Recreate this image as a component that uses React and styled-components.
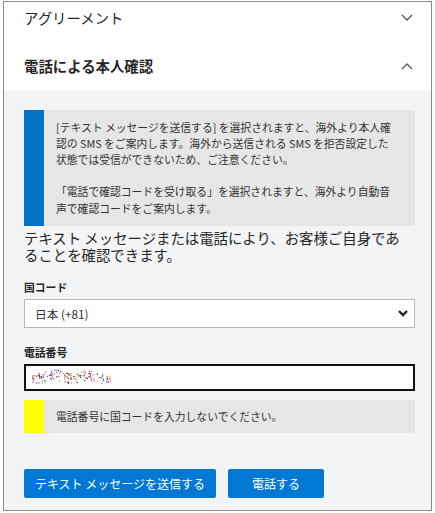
import React from 'react'
import styled, { createGlobalStyle } from 'styled-components'

const Global = createGlobalStyle`
  html, body {
    margin: 0;
    background: #ffffff;
  }
  body {
    font-family: "Noto Sans CJK JP", "Noto Sans", sans-serif;
    color: #262626;
  }
`

const Frame = styled.div`
  box-sizing: border-box;
  width: 429px;
  height: 510px;
  margin: 1px 0 0 3px;
  border: 1px solid #8a8a8a;
  overflow: hidden;
  display: flex;
  flex-direction: column;
`

const AccordionRow = styled.div`
  box-sizing: border-box;
  height: ${p => (p.$first ? '40px' : '48px')};
  padding: 0 18px ${p => (p.$first ? '8px' : '0')} 20px;
  display: flex;
  align-items: center;
  justify-content: space-between;
  background: #ffffff;
`

const RowTitle = styled.span`
  font-size: 14.4px;
  line-height: 22px;
  font-weight: ${p => (p.$bold ? 700 : 400)};
  color: #262626;
`

const Panel = styled.div`
  flex: 1;
  background: #f3f4f6;
  padding: 20px 16px 0 20px;
  display: flex;
  flex-direction: column;
`

const Notice = styled.div`
  display: flex;
  background: #e6e6e6;
  margin-top: ${p => p.$mt || 0}px;
`

const NoticeBar = styled.div`
  width: 20px;
  flex: none;
  background: ${p => p.$color};
`

const NoticeBody = styled.div`
  flex: 1;
  padding: ${p => p.$pad};
  font-size: 10.8px;
  line-height: 16.2px;
  color: #333333;
  p {
    margin: 0;
  }
  p + p {
    margin-top: 16.2px;
  }
`

const Lead = styled.p`
  margin: 3px 0 0;
  font-size: 14.4px;
  line-height: 17px;
  color: #262626;
`

const FieldLabel = styled.label`
  display: block;
  margin-top: ${p => p.$mt}px;
  font-size: 10.8px;
  line-height: 16px;
  font-weight: 700;
  color: #262626;
`

const SelectBox = styled.div`
  box-sizing: border-box;
  margin-top: 4px;
  height: 29px;
  background: #ffffff;
  border: 1px solid #b8b8b8;
  padding: 0 5px 0 10px;
  display: flex;
  align-items: center;
  justify-content: space-between;
  font-size: 11.7px;
  color: #333333;
`

const InputBox = styled.div`
  box-sizing: border-box;
  margin-top: 4px;
  height: 27px;
  background: #ffffff;
  border: 2px solid #111111;
  padding: 0 6px;
  display: flex;
  align-items: center;
`

const Buttons = styled.div`
  display: flex;
  gap: 12px;
  margin-top: 36px;
`

const Button = styled.button`
  box-sizing: border-box;
  height: 29px;
  width: ${p => p.$w}px;
  border: none;
  border-radius: 2px;
  background: #0078d4;
  color: #ffffff;
  font-family: "Noto Sans CJK JP", "Noto Sans", sans-serif;
  font-size: 12px;
  padding: 0;
  cursor: pointer;
`

function Chevron({ up }) {
  return (
    <svg width="12" height="8" viewBox="0 0 12 8">
      <path
        d={up ? 'M1 7 L6 2 L11 7' : 'M1 1 L6 6 L11 1'}
        fill="none"
        stroke="#555"
        strokeWidth="1.3"
      />
    </svg>
  )
}

function SelectArrow() {
  return (
    <svg width="12" height="8" viewBox="0 0 12 8">
      <path d="M2 2 L6 6 L10 2" fill="none" stroke="#222" strokeWidth="2.4" />
    </svg>
  )
}

// masked phone number: scattered coloured dots
function Scribble() {
  const colors = ['#222', '#f0a030', '#3a8ee0', '#d04080', '#888', '#e07020', '#6a3ad0']
  let seed = 7
  const rnd = () => {
    seed = (seed * 9301 + 49297) % 233280
    return seed / 233280
  }
  const dots = []
  for (let i = 0; i < 150; i++) {
    const x = rnd() * 78
    const y = 2 + rnd() * 11 + Math.sin(x / 5) * 1.5
    dots.push(
      <rect
        key={i}
        x={x.toFixed(1)}
        y={y.toFixed(1)}
        width="1.2"
        height="1.2"
        fill={colors[Math.floor(rnd() * colors.length)]}
      />
    )
  }
  return (
    <svg width="80" height="16" viewBox="0 0 80 16">
      {dots}
    </svg>
  )
}

export default function App() {
  return (
    <>
      <Global />
      <Frame>
        <AccordionRow $first>
          <RowTitle>アグリーメント</RowTitle>
          <Chevron />
        </AccordionRow>
        <AccordionRow>
          <RowTitle $bold>電話による本人確認</RowTitle>
          <Chevron up />
        </AccordionRow>
        <Panel>
          <Notice>
            <NoticeBar $color="#0072c6" />
            <NoticeBody $pad="8.5px 10px 10px 12px">
              <p>
                [テキスト メッセージを送信する] を選択されますと、海外より本人確
                <br />
                認の SMS をご案内します。海外から送信される SMS を拒否設定した
                <br />
                状態では受信ができないため、ご注意ください。
              </p>
              <p>
                「電話で確認コードを受け取る」を選択されますと、海外より自動音
                <br />
                声で確認コードをご案内します。
              </p>
            </NoticeBody>
          </Notice>
          <Lead>
            テキスト メッセージまたは電話により、お客様ご自身であ
            <br />
            ることを確認できます。
          </Lead>
          <FieldLabel $mt={16}>国コード</FieldLabel>
          <SelectBox>
            <span>日本 (+81)</span>
            <SelectArrow />
          </SelectBox>
          <FieldLabel $mt={16}>電話番号</FieldLabel>
          <InputBox>
            <Scribble />
          </InputBox>
          <Notice $mt={9}>
            <NoticeBar $color="#ffff00" />
            <NoticeBody $pad="8.5px 10px 8.5px 12px">
              <p>電話番号に国コードを入力しないでください。</p>
            </NoticeBody>
          </Notice>
          <Buttons>
            <Button $w={192}>テキスト メッセージを送信する</Button>
            <Button $w={96}>電話する</Button>
          </Buttons>
        </Panel>
      </Frame>
    </>
  )
}
